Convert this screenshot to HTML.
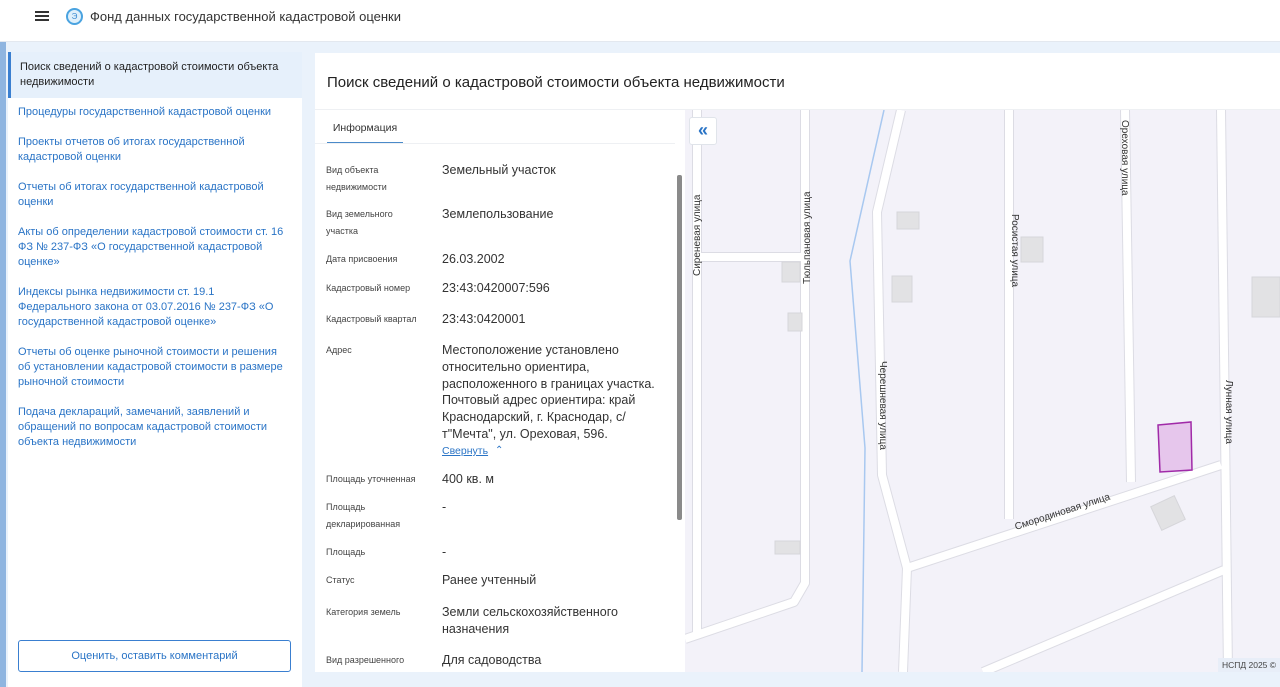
<!DOCTYPE html>
<html><head><meta charset="utf-8"><style>
*{margin:0;padding:0;box-sizing:border-box}
body{width:1280px;height:687px;overflow:hidden;background:#eaf2fb;font-family:"Liberation Sans",sans-serif;position:relative;color:#333}
.hdr{position:absolute;left:0;top:0;width:1280px;height:42px;background:#fff;border-bottom:1px solid #e3e8ef}
.hdr .t{position:absolute;left:90px;top:9px;font-size:13px;color:#333}
.side{position:absolute;left:8px;top:52px;width:294px;height:635px;background:#fff}
.side .a{background:#e6f0fb;border-left:3px solid #3a7fd0;padding:8px 20px 8px 9px;font-size:11px;line-height:15px;color:#222}
.side .l{padding:7px 17px 8px 10px;font-size:11px;line-height:15px;color:#2a74c6}
.btn{position:absolute;left:10px;top:588px;width:273px;height:32px;border:1px solid #3a7fd0;border-radius:3px;color:#2a74c6;font-size:11px;text-align:center;line-height:30px}
.main{position:absolute;left:315px;top:53px;width:965px;height:619px;background:#fff}
.title{position:absolute;left:12px;top:21px;font-size:15px;color:#222}
.info{position:absolute;left:0;top:57px;width:370px;height:562px;background:#fff;overflow:hidden}
.tab{position:absolute;left:12px;top:12px;width:76px;height:22px;border-bottom:2px solid #4a8ac9;font-size:10.5px;text-align:center;color:#333}
.sep{position:absolute;left:0;top:33px;width:360px;height:1px;background:#eef0f3}
.r{position:absolute;left:11px;font-size:9px;line-height:17px;color:#444;width:110px}
.v{position:absolute;left:127px;font-size:12.5px;line-height:16.8px;color:#333;width:225px}
.map{position:absolute;left:370px;top:57px;width:595px;height:562px;background:#f3f2f9;overflow:hidden}
</style></head><body>
<div style="position:absolute;left:0;top:42px;width:6px;height:645px;background:#8fb5e0"></div>
<div class="hdr">
<div style="position:absolute;left:35px;top:11px;width:14px;height:2px;background:#333;box-shadow:0 4px 0 #333,0 8px 0 #333"></div>
<div style="position:absolute;left:66px;top:8px;width:17px;height:17px;border-radius:50%;border:2px solid #4aa3e0;background:#dff0fb;font-size:8px;color:#3a8ad0;text-align:center;line-height:13px">Э</div>
<div class="t">Фонд данных государственной кадастровой оценки</div></div>
<div class="side">
<div class="a">Поиск сведений о кадастровой стоимости объекта недвижимости</div>
<div class="l">Процедуры государственной кадастровой оценки</div>
<div class="l">Проекты отчетов об итогах государственной кадастровой оценки</div>
<div class="l">Отчеты об итогах государственной кадастровой оценки</div>
<div class="l">Акты об определении кадастровой стоимости ст. 16 ФЗ № 237-ФЗ «О государственной кадастровой оценке»</div>
<div class="l">Индексы рынка недвижимости ст. 19.1 Федерального закона от 03.07.2016 № 237-ФЗ «О государственной кадастровой оценке»</div>
<div class="l">Отчеты об оценке рыночной стоимости и решения об установлении кадастровой стоимости в размере рыночной стоимости</div>
<div class="l">Подача деклараций, замечаний, заявлений и обращений по вопросам кадастровой стоимости объекта недвижимости</div>
<div class="btn">Оценить, оставить комментарий</div>
</div>
<div class="main">
<div class="title">Поиск сведений о кадастровой стоимости объекта недвижимости</div>
<div style="position:absolute;left:0;top:56px;width:965px;height:1px;background:#eef0f3"></div>
<div class="info">
<div class="tab">Информация</div><div class="sep"></div>
<div style="position:absolute;left:362px;top:65px;width:5px;height:345px;background:#8a8a8a;border-radius:2px"></div>
<div class="r" style="top:52px">Вид объекта<br>недвижимости</div><div class="v" style="top:52px">Земельный участок</div>
<div class="r" style="top:96px">Вид земельного<br>участка</div><div class="v" style="top:96px">Землепользование</div>
<div class="r" style="top:141px">Дата присвоения</div><div class="v" style="top:141px">26.03.2002</div>
<div class="r" style="top:170px">Кадастровый номер</div><div class="v" style="top:170px">23:43:0420007:596</div>
<div class="r" style="top:201px">Кадастровый квартал</div><div class="v" style="top:201px">23:43:0420001</div>
<div class="r" style="top:232px">Адрес</div><div class="v" style="top:232px">Местоположение установлено относительно ориентира, расположенного в границах участка. Почтовый адрес ориентира: край Краснодарский, г. Краснодар, с/т"Мечта", ул. Ореховая, 596.</div>
<div style="position:absolute;left:127px;top:335px;font-size:10.5px;color:#2a74c6;text-decoration:underline">Свернуть</div><div style="position:absolute;left:180px;top:335px;font-size:10px;color:#2a74c6">⌃</div>
<div class="r" style="top:361px">Площадь уточненная</div><div class="v" style="top:361px">400 кв. м</div>
<div class="r" style="top:389px">Площадь<br>декларированная</div><div class="v" style="top:389px">-</div>
<div class="r" style="top:434px">Площадь</div><div class="v" style="top:434px">-</div>
<div class="r" style="top:462px">Статус</div><div class="v" style="top:462px">Ранее учтенный</div>
<div class="r" style="top:494px">Категория земель</div><div class="v" style="top:494px">Земли сельскохозяйственного назначения</div>
<div class="r" style="top:542px">Вид разрешенного</div><div class="v" style="top:542px">Для садоводства</div>
</div>
<div class="map">
<svg width="595" height="562" viewBox="685 110 595 562" style="position:absolute;left:0;top:0">
<polyline points="884,110 850,261 865,448 862,672" fill="none" stroke="#a8c8f0" stroke-width="1.5"/>
<g fill="none" stroke="#dcdce4" stroke-width="10" stroke-linejoin="round">
<polyline points="697,110 697,632"/><polyline points="697,257 805,257"/>
<polyline points="805,110 805,583 794,602 685,639"/>
<polyline points="901,110 877,212 882,475 907,568 903,672"/>
<polyline points="1009,110 1009,519"/><polyline points="1125,110 1131,482"/>
<polyline points="1221,110 1228,672"/><polyline points="907,568 1221,465"/>
<polyline points="983,672 1224,570"/>
</g>
<g fill="none" stroke="#fff" stroke-width="8" stroke-linejoin="round">
<polyline points="697,110 697,632"/><polyline points="697,257 805,257"/>
<polyline points="805,110 805,583 794,602 685,639"/>
<polyline points="901,110 877,212 882,475 907,568 903,672"/>
<polyline points="1009,110 1009,519"/><polyline points="1125,110 1131,482"/>
<polyline points="1221,110 1228,672"/><polyline points="907,568 1221,465"/>
<polyline points="983,672 1224,570"/>
</g>
<g fill="#e2e2e4" stroke="#d6d6da">
<rect x="897" y="212" width="22" height="17"/><rect x="892" y="276" width="20" height="26"/>
<rect x="782" y="262" width="18" height="20"/><rect x="788" y="313" width="14" height="18"/>
<rect x="775" y="541" width="25" height="13"/><rect x="1021" y="237" width="22" height="25"/>
<rect x="1252" y="277" width="28" height="40"/>
<rect x="1155" y="500" width="26" height="26" transform="rotate(-25 1168 513)"/>
</g>
<polygon points="1158,425 1191,422 1192,470 1160,472" fill="#e6c6ec" stroke="#a02aa8" stroke-width="1.5"/>
<g font-family="Liberation Sans" font-size="10" fill="#333" xml:space="preserve">
<text transform="translate(700,276) rotate(-90)">Сиреневая   улица</text>
<text transform="translate(810,284) rotate(-90)">Тюльпановая   улица</text>
<text transform="translate(880,361) rotate(90)">Черешневая   улица</text>
<text transform="translate(1012,214) rotate(90)">Росистая   улица</text>
<text transform="translate(1122,120) rotate(90)">Ореховая   улица</text>
<text transform="translate(1226,380) rotate(90)">Лунная   улица</text>
<text transform="translate(1016,530) rotate(-18)">Смородиновая   улица</text>
</g>
<rect x="1218" y="658" width="62" height="14" fill="#e8eef8"/>
<text x="1222" y="668" font-family="Liberation Sans" font-size="8.5" fill="#444">НСПД 2025 ©</text>
</svg>
<div style="position:absolute;left:4px;top:7px;width:28px;height:28px;background:#fff;border:1px solid #e0e4ea;border-radius:3px;color:#2a74c6;font-size:18px;font-weight:bold;text-align:center;line-height:24px">«</div>
</div>
</div>
</body></html>
